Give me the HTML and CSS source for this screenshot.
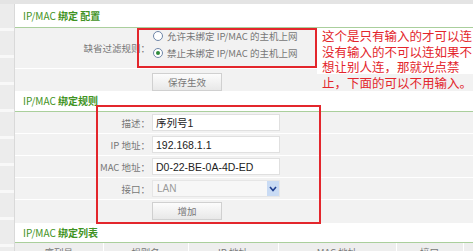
FILE: index.html
```html
<!DOCTYPE html>
<html>
<head>
    <title>IP/MAC 绑定</title>
    <meta charset="utf-8">
    <link rel="stylesheet" href="styles.css">
</head>
<body>
<div class="frame">
    <div class="topbar"></div>
    <div class="layout">
        <div class="side"></div>
        <div class="main">
            <h3 class="sec sec-first">IP/MAC <b>绑定 配置</b></h3>
            <div class="row row-tall">
                <div class="lbl">缺省过滤规则：</div>
                <div class="radios">
                    <label class="opt"><span class="radio"></span>允许未绑定 IP/MAC 的主机上网</label>
                    <label class="opt"><span class="radio on"></span>禁止未绑定 IP/MAC 的主机上网</label>
                </div>
            </div>
            <div class="row row-btn">
                <div class="lbl"></div>
                <div><button class="btn">保存生效</button></div>
            </div>

            <h3 class="sec sec-mid">IP/MAC <b>绑定规则</b></h3>
            <div class="row">
                <div class="lbl">描述：</div>
                <div><input class="field" value="序列号1" readonly></div>
            </div>
            <div class="row">
                <div class="lbl">IP 地址：</div>
                <div><input class="field" value="192.168.1.1" readonly></div>
            </div>
            <div class="row">
                <div class="lbl">MAC 地址：</div>
                <div><input class="field" value="D0-22-BE-0A-4D-ED" readonly></div>
            </div>
            <div class="row">
                <div class="lbl">接口：</div>
                <div class="select"><span>LAN</span><span class="arrow"><svg width="8" height="6" viewBox="0 0 8 6"><polyline points="1,1 4,4.5 7,1" fill="none" stroke="#1f3f8f" stroke-width="1.6"/></svg></span></div>
            </div>
            <div class="row row-btn row-add">
                <div class="lbl"></div>
                <div><button class="btn">增加</button></div>
            </div>

            <h3 class="sec sec-last">IP/MAC <b>绑定列表</b></h3>
            <table class="list">
                <colgroup>
                    <col style="width:88px"><col style="width:85px"><col style="width:90px">
                    <col style="width:118px"><col style="width:67px"><col style="width:30px">
                </colgroup>
                <tr><th>序列号</th><th>规则名</th><th>IP 地址</th><th>MAC 地址</th><th>接口</th><th></th></tr>
            </table>
        </div>
    </div>

    <!-- annotation drawn over the screenshot -->
    <div class="mark mark-a"></div>
    <div class="mark mark-b"></div>
    <div class="note">这个是只有输入的才可以连<br>没有输入的不可以连如果不<br>想让别人连，那就光点禁<br>止，下面的可以不用输入。</div>
</div>
</body>
</html>
```

FILE: styles.css
```css
body {margin: 0; width: 473px; height: 251px; overflow: hidden; background: #fff; color: #777; font-family: "Noto Sans CJK SC", "Liberation Sans", sans-serif; font-size: 9.5px;}
.frame {position: relative; height: 251px;}
.topbar {height: 4px; background: #e4e4e4;}
.layout {display: flex;}
.side {width: 14px; height: 247px; border-right: 1px solid #d9d9d9; background: repeating-linear-gradient(#ececec 0 24px, #f8f8f8 24px 27px);}
.main {flex: 1; min-width: 0;}

.sec {margin: 0; padding-left: 8px; font-size: 10px; font-weight: normal; color: #3f9324; border-bottom: 1px solid #aacf9c;}
.sec b {font-weight: 700;}
.sec-first {height: 23px; line-height: 23px;}
.sec-mid {height: 20px; line-height: 20px;}
.sec-last {height: 19px; line-height: 19px;}

.row {display: grid; grid-template-columns: 135px 1fr; column-gap: 2px; align-items: center; height: 21px; background: #f2f2f2; border-bottom: 1px solid #fff;}
.lbl {text-align: right; white-space: nowrap;}
.row-tall {height: 40px; align-items: start;}
.row-tall .lbl {line-height: 40px;}
.radios {display: flex; flex-direction: column; gap: 3px; padding-top: 1px;}
.opt {display: flex; align-items: center; height: 14px; white-space: nowrap;}
.radio {width: 8px; height: 8px; margin: 0 4px 0 1px; border: 1px solid #6f86a8; border-radius: 50%; background: #fff; display: flex; align-items: center; justify-content: center;}
.radio.on::after {content: ""; width: 4px; height: 4px; border-radius: 50%; background: #2f8a3a;}

.row-btn {height: 18px; padding-top: 4px; border-bottom: 0; align-items: start;}
.row-add {padding: 2px 0 3px;}
.btn {width: 70px; height: 18px; padding: 0; border: 1px solid #d0d0d0; background: linear-gradient(#fcfcfc, #e8e8e8); color: #777; font: inherit; font-size: 9.5px;}

.field {display: block; box-sizing: border-box; width: 128px; height: 17px; margin: 0; padding: 0 3px; border: 1px solid #e0e0e0; background: #fff; color: #222; font-family: "Liberation Sans", "Noto Sans CJK SC", sans-serif; font-size: 10.5px; outline: none;}
.select {display: flex; align-items: center; justify-content: space-between; box-sizing: border-box; width: 128px; height: 17px; padding-left: 4px; border: 1px solid #e6e6e6; background: #f7f7f7; color: #9a9a9a; font-family: "Liberation Sans", sans-serif; font-size: 10px;}
.arrow {display: flex; align-items: center; justify-content: center; width: 12px; height: 15px; background: #c9dbf4;}

.list {border-collapse: collapse; table-layout: fixed; width: 478px;}
.list th {height: 18px; padding: 3px 0 0; vertical-align: top; background: #eeeeee; border-left: 1px solid #fff; color: #777; font-weight: normal; font-size: 9.5px; line-height: 12px;}
.list th:first-child {border-left: 0;}

.mark {position: absolute; box-sizing: border-box; border: 2px solid #e3262c;}
.mark-a {left: 137px; top: 28px; width: 180px; height: 40px;}
.mark-b {left: 96px; top: 105px; width: 225px; height: 119px;}
.note {position: absolute; left: 317px; top: 28px; width: 156px; padding-left: 5px; box-sizing: border-box; background: linear-gradient(#fff 0 46px, transparent 46px); color: #e3262c; font-size: 12.5px; line-height: 15.6px; white-space: nowrap;}
```
